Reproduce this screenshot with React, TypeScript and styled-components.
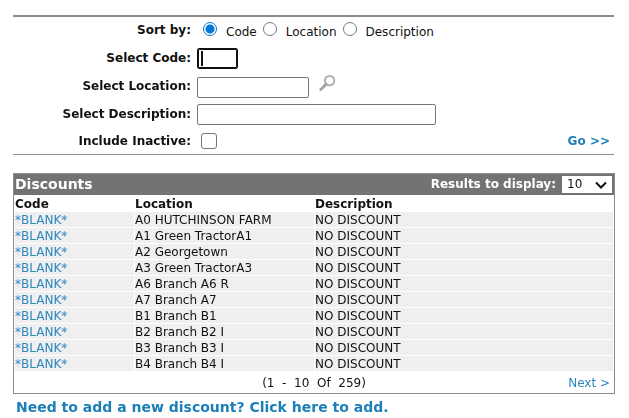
import React, { useState } from "react";
import styled, { createGlobalStyle } from "styled-components";

const GlobalStyle = createGlobalStyle`
  *, *::before, *::after { box-sizing: border-box; }
  body {
    margin: 0;
    background: #fff;
    color: #111;
    font: 12px/15px Verdana, "DejaVu Sans", sans-serif;
  }
  input, select, button { font: inherit; color: inherit; margin: 0; }
`;

const Page = styled.main`
  padding: 15px 14px 0 13px;
`;

const SearchForm = styled.form`
  margin-right: 1px;
  border-top: 2px solid #8c8c8c;
  border-bottom: 1px solid #8c8c8c;
`;

const FieldRow = styled.div`
  display: grid;
  grid-template-columns: 178px 1fr auto;
  column-gap: 6px;
  align-items: center;
  height: 28px;

  &:first-child { height: 27px; }
  &:last-child { height: 26px; }
`;

const FieldLabel = styled.label`
  font-weight: bold;
  text-align: right;
  white-space: nowrap;
`;

const Field = styled.div`
  display: flex;
  align-items: center;
`;

const LookupField = styled(Field)`
  padding-top: 2px;
`;

const RadioOptions = styled.div`
  display: flex;
  gap: 6px;
  padding-left: 6px;
`;

const RadioLabel = styled.label`
  display: flex;
  align-items: flex-start;
  gap: 9px;

  span { padding-top: 4px; }
`;

const Radio = styled.input`
  appearance: none;
  width: 14px;
  height: 14px;
  margin-top: 1px;
  border: 1px solid #767676;
  border-radius: 50%;
  background: #fff;

  ${RadioLabel} & { margin-top: 1px; }

  &:checked {
    border-color: #0078d7;
    background: radial-gradient(circle, #0078d7 4px, #fff 5px);
  }
`;

const TextInput = styled.input<{ $width: number }>`
  display: block;
  width: ${(p) => p.$width}px;
  height: 21px;
  padding: 1px 3px;
  border: 1px solid #767676;
  border-radius: 2px;
  background: #fff;

  &:focus {
    outline: 1px solid #101010;
    outline-offset: -2px;
    border-color: #101010;
  }

  &:focus:placeholder-shown {
    caret-color: transparent;
    background: linear-gradient(#111, #111) 3px center / 2px 15px no-repeat #fff;
  }
`;

const Checkbox = styled.input`
  appearance: none;
  width: 16px;
  height: 16px;
  border: 1px solid #767676;
  border-radius: 3px;
  background: #fff;

  ${Field} & { margin-left: 4px; }

  &:checked { background: #0078d7; }
`;

const LookupButton = styled.button`
  display: flex;
  padding: 0;
  border: 0;
  background: none;

  ${LookupField} & { margin: 0 0 8px 10px; }
`;

const GoButton = styled.button`
  padding: 0 4px 0 0;
  border: 0;
  background: none;
  && { color: #1c7fb8; font-weight: bold; }
`;

const Panel = styled.section`
  margin-top: 18px;
  border: 1px solid #8c8c8c;
`;

const PanelBar = styled.header`
  display: flex;
  align-items: center;
  justify-content: space-between;
  height: 21px;
  padding: 0 2px 0 1px;
  background: #737373;
  color: #fff;
  font-weight: bold;
`;

const PanelTitle = styled.h1`
  margin: 0;
  font-size: 14px;
`;

const PageSize = styled.label`
  display: flex;
  align-items: center;
  gap: 6px;
`;

const SelectBox = styled.span`
  display: grid;
  align-items: center;

  > * { grid-area: 1 / 1; }
  svg { justify-self: end; margin-right: 5px; pointer-events: none; }
`;

const Select = styled.select`
  appearance: none;
  width: 50px;
  height: 17px;
  padding: 0 5px;
  border: 0;
  border-radius: 0;
  background: #fff;
  && { color: #111; font-weight: normal; }
`;

const Table = styled.table`
  width: 100%;
  table-layout: fixed;
  border-spacing: 1px;

  th, td {
    height: 15px;
    padding: 1px 0 0;
    line-height: 14px;
    text-align: left;
    white-space: nowrap;
  }
  td { background: #efefef; }
  th:nth-child(1) { width: 119px; }
  th:nth-child(2) { width: 179px; }
`;

const Link = styled.a`
  color: #2c87bd;
  text-decoration: none;
`;

const Pager = styled.footer`
  display: grid;
  grid-template-columns: 1fr auto 1fr;
  align-items: center;
  height: 21px;
  padding: 1px 4px 0;

  span { grid-column: 2; white-space: pre; }
  ${Link} { justify-self: end; }
`;

const AddLink = styled(Link)`
  display: inline-block;
  margin: 4px 3px;
  color: #1c7fb8;
  font-size: 14px;
  font-weight: bold;
  line-height: 18px;
`;

const SearchIcon = () => (
  <svg width="18" height="18" viewBox="0 0 18 18" fill="none" aria-hidden="true">
    <circle cx="10.6" cy="6.6" r="4.7" stroke="#b0b0b0" strokeWidth="2" />
    <path d="M7 10.2 1.8 15.4" stroke="#a2a2a2" strokeWidth="2.8" strokeLinecap="round" />
  </svg>
);

const Chevron = () => (
  <svg width="12" height="8" viewBox="0 0 12 8" fill="none" aria-hidden="true">
    <path d="m1 1.5 5 5 5-5" stroke="#111" strokeWidth="2" />
  </svg>
);

const sortOptions = ["Code", "Location", "Description"];

const discounts = [
  "A0 HUTCHINSON FARM",
  "A1 Green TractorA1",
  "A2 Georgetown",
  "A3 Green TractorA3",
  "A6 Branch A6 R",
  "A7 Branch A7",
  "B1 Branch B1",
  "B2 Branch B2 I",
  "B3 Branch B3 I",
  "B4 Branch B4 I",
].map((location) => ({ code: "*BLANK*", location, description: "NO DISCOUNT" }));

export default function App() {
  const [sort, setSort] = useState("Code");

  return (
    <Page>
      <GlobalStyle />
      <SearchForm onSubmit={(e) => e.preventDefault()}>
        <FieldRow role="radiogroup" aria-labelledby="sort-label">
          <FieldLabel as="span" id="sort-label">Sort by:</FieldLabel>
          <RadioOptions>
            {sortOptions.map((option) => (
              <RadioLabel key={option}>
                <Radio type="radio" name="sort" checked={sort === option} onChange={() => setSort(option)} />
                <span>{option}</span>
              </RadioLabel>
            ))}
          </RadioOptions>
        </FieldRow>
        <FieldRow>
          <FieldLabel htmlFor="code">Select Code:</FieldLabel>
          <Field>
            <TextInput id="code" placeholder=" " $width={41} autoFocus />
          </Field>
        </FieldRow>
        <FieldRow>
          <FieldLabel htmlFor="location">Select Location:</FieldLabel>
          <LookupField>
            <TextInput id="location" $width={112} />
            <LookupButton type="button" aria-label="Find location">
              <SearchIcon />
            </LookupButton>
          </LookupField>
        </FieldRow>
        <FieldRow>
          <FieldLabel htmlFor="description">Select Description:</FieldLabel>
          <Field>
            <TextInput id="description" $width={239} />
          </Field>
        </FieldRow>
        <FieldRow>
          <FieldLabel htmlFor="inactive">Include Inactive:</FieldLabel>
          <Field>
            <Checkbox id="inactive" type="checkbox" />
          </Field>
          <GoButton type="submit">Go &gt;&gt;</GoButton>
        </FieldRow>
      </SearchForm>

      <Panel>
        <PanelBar>
          <PanelTitle>Discounts</PanelTitle>
          <PageSize>
            Results to display:
            <SelectBox>
              <Select defaultValue="10">
                <option>10</option>
                <option>25</option>
                <option>50</option>
              </Select>
              <Chevron />
            </SelectBox>
          </PageSize>
        </PanelBar>
        <Table>
          <thead>
            <tr>
              <th scope="col">Code</th>
              <th scope="col">Location</th>
              <th scope="col">Description</th>
            </tr>
          </thead>
          <tbody>
            {discounts.map((row) => (
              <tr key={row.location}>
                <td><Link href="#discount">{row.code}</Link></td>
                <td>{row.location}</td>
                <td>{row.description}</td>
              </tr>
            ))}
          </tbody>
        </Table>
        <Pager>
          <span>{"(1  -  10  Of  259)"}</span>
          <Link href="#next">Next &gt;</Link>
        </Pager>
      </Panel>
      <AddLink href="#add">Need to add a new discount? Click here to add.</AddLink>
    </Page>
  );
}
